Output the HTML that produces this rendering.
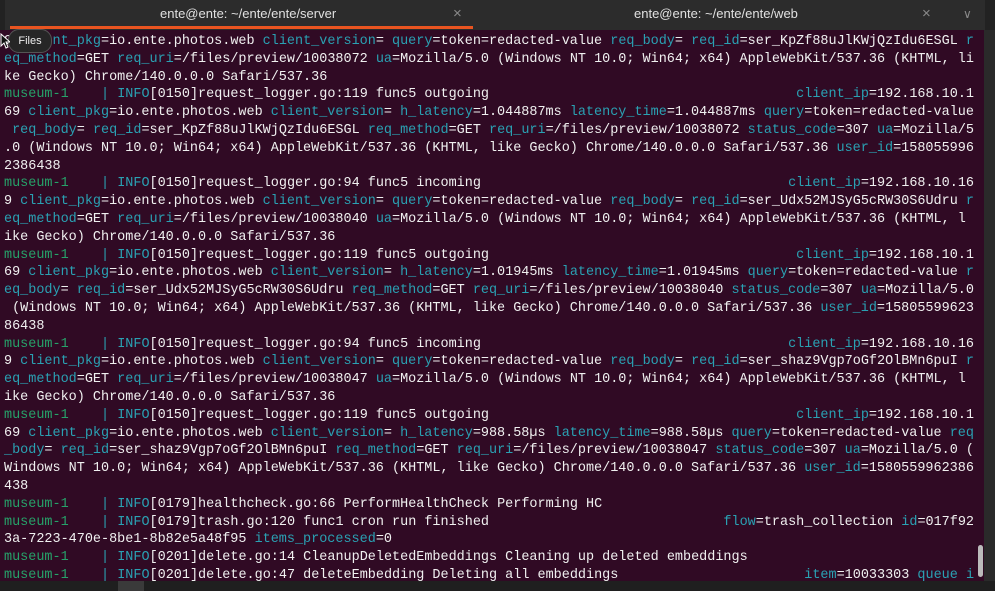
<!DOCTYPE html>
<html><head><meta charset="utf-8"><style>
html,body{margin:0;padding:0;width:995px;height:591px;overflow:hidden;background:#2b2b2b;}
#tabs{position:absolute;left:0;top:0;width:995px;height:30px;background:#2c2c2c;font-family:"Liberation Sans",sans-serif;font-size:13px;color:#e0e0e0;}
.tt{position:absolute;top:6px;}
.x{position:absolute;top:5px;color:#8a8a8a;font-size:15px;}
#ul{position:absolute;left:10px;top:26px;width:463px;height:3px;background:#e95420;}
#term{position:absolute;left:0;top:30px;width:984px;height:551px;background:#300a24;overflow:hidden;}
pre{margin:0;position:absolute;left:4px;top:3px;font-family:"Liberation Mono",monospace;font-size:13.48px;line-height:17.8px;color:#f0f0f0;}
i{font-style:normal;color:#2aa1b3;}
b{font-weight:normal;color:#26a269;}
#bot{position:absolute;left:0;top:581px;width:995px;height:10px;background:#1f1f1f;}
#tip{position:absolute;left:8px;top:29px;width:42px;height:22px;border-radius:11px;background:#262626;border:1px solid #555;color:#eee;font-family:"Liberation Sans",sans-serif;font-size:11px;line-height:22px;text-align:center;}
#thumb{position:absolute;left:978px;width:5px;height:32px;border-radius:3px;background:#bbb;}
</style></head><body>
<div id="tabs">
<div style="position:absolute;left:0;top:0;width:5px;height:30px;background:#222"></div>
<span class="tt" style="left:160px">ente@ente: ~/ente/ente/server</span>
<span class="x" style="left:453px">×</span>
<span class="tt" style="left:634px">ente@ente: ~/ente/ente/web</span>
<span class="x" style="left:922px">×</span>
<span class="x" style="left:963px;font-size:12px;top:7px">∨</span>
<div style="position:absolute;left:985px;top:0;width:10px;height:30px;background:#222"></div>
<div id="ul"></div>
</div>
<div id="term"><pre>9 <i>client_pkg</i>=io.ente.photos.web <i>client_version</i>= <i>query</i>=token=redacted-value <i>req_body</i>= <i>req_id</i>=ser_KpZf88uJlKWjQzIdu6ESGL <i>r</i>
<i>eq_method</i>=GET <i>req_uri</i>=/files/preview/10038072 <i>ua</i>=Mozilla/5.0 (Windows NT 10.0; Win64; x64) AppleWebKit/537.36 (KHTML, li
ke Gecko) Chrome/140.0.0.0 Safari/537.36
<b>museum-1</b>    <i>|</i> <i>INFO</i>[0150]request_logger.go:119 func5 outgoing                                      <i>client_ip</i>=192.168.10.1
69 <i>client_pkg</i>=io.ente.photos.web <i>client_version</i>= <i>h_latency</i>=1.044887ms <i>latency_time</i>=1.044887ms <i>query</i>=token=redacted-value
 <i>req_body</i>= <i>req_id</i>=ser_KpZf88uJlKWjQzIdu6ESGL <i>req_method</i>=GET <i>req_uri</i>=/files/preview/10038072 <i>status_code</i>=307 <i>ua</i>=Mozilla/5
.0 (Windows NT 10.0; Win64; x64) AppleWebKit/537.36 (KHTML, like Gecko) Chrome/140.0.0.0 Safari/537.36 <i>user_id</i>=158055996
2386438
<b>museum-1</b>    <i>|</i> <i>INFO</i>[0150]request_logger.go:94 func5 incoming                                      <i>client_ip</i>=192.168.10.16
9 <i>client_pkg</i>=io.ente.photos.web <i>client_version</i>= <i>query</i>=token=redacted-value <i>req_body</i>= <i>req_id</i>=ser_Udx52MJSyG5cRW30S6Udru <i>r</i>
<i>eq_method</i>=GET <i>req_uri</i>=/files/preview/10038040 <i>ua</i>=Mozilla/5.0 (Windows NT 10.0; Win64; x64) AppleWebKit/537.36 (KHTML, l
ike Gecko) Chrome/140.0.0.0 Safari/537.36
<b>museum-1</b>    <i>|</i> <i>INFO</i>[0150]request_logger.go:119 func5 outgoing                                      <i>client_ip</i>=192.168.10.1
69 <i>client_pkg</i>=io.ente.photos.web <i>client_version</i>= <i>h_latency</i>=1.01945ms <i>latency_time</i>=1.01945ms <i>query</i>=token=redacted-value <i>r</i>
<i>eq_body</i>= <i>req_id</i>=ser_Udx52MJSyG5cRW30S6Udru <i>req_method</i>=GET <i>req_uri</i>=/files/preview/10038040 <i>status_code</i>=307 <i>ua</i>=Mozilla/5.0
 (Windows NT 10.0; Win64; x64) AppleWebKit/537.36 (KHTML, like Gecko) Chrome/140.0.0.0 Safari/537.36 <i>user_id</i>=15805599623
86438
<b>museum-1</b>    <i>|</i> <i>INFO</i>[0150]request_logger.go:94 func5 incoming                                      <i>client_ip</i>=192.168.10.16
9 <i>client_pkg</i>=io.ente.photos.web <i>client_version</i>= <i>query</i>=token=redacted-value <i>req_body</i>= <i>req_id</i>=ser_shaz9Vgp7oGf2OlBMn6puI <i>r</i>
<i>eq_method</i>=GET <i>req_uri</i>=/files/preview/10038047 <i>ua</i>=Mozilla/5.0 (Windows NT 10.0; Win64; x64) AppleWebKit/537.36 (KHTML, l
ike Gecko) Chrome/140.0.0.0 Safari/537.36
<b>museum-1</b>    <i>|</i> <i>INFO</i>[0150]request_logger.go:119 func5 outgoing                                      <i>client_ip</i>=192.168.10.1
69 <i>client_pkg</i>=io.ente.photos.web <i>client_version</i>= <i>h_latency</i>=988.58µs <i>latency_time</i>=988.58µs <i>query</i>=token=redacted-value <i>req</i>
<i>_body</i>= <i>req_id</i>=ser_shaz9Vgp7oGf2OlBMn6puI <i>req_method</i>=GET <i>req_uri</i>=/files/preview/10038047 <i>status_code</i>=307 <i>ua</i>=Mozilla/5.0 (
Windows NT 10.0; Win64; x64) AppleWebKit/537.36 (KHTML, like Gecko) Chrome/140.0.0.0 Safari/537.36 <i>user_id</i>=1580559962386
438
<b>museum-1</b>    <i>|</i> <i>INFO</i>[0179]healthcheck.go:66 PerformHealthCheck Performing HC
<b>museum-1</b>    <i>|</i> <i>INFO</i>[0179]trash.go:120 func1 cron run finished                             <i>flow</i>=trash_collection <i>id</i>=017f92
3a-7223-470e-8be1-8b82e5a48f95 <i>items_processed</i>=0
<b>museum-1</b>    <i>|</i> <i>INFO</i>[0201]delete.go:14 CleanupDeletedEmbeddings Cleaning up deleted embeddings
<b>museum-1</b>    <i>|</i> <i>INFO</i>[0201]delete.go:47 deleteEmbedding Deleting all embeddings                       <i>item</i>=10033303 <i>queue</i> <i>i</i></pre>
<div id="thumb" style="top:515px"></div>
</div>
<div style="position:absolute;left:984px;top:30px;width:11px;height:551px;background:#2a2a2a"></div>
<div id="bot"><div style="position:absolute;left:118px;top:0;width:26px;height:10px;background:#3a3a3a"></div></div>
<div id="tip">Files</div>
<svg style="position:absolute;left:0;top:33px" width="10" height="16"><path d="M1 1 L1 13 L4 10 L6 15 L8 14 L6 9 L10 9 Z" fill="#111" stroke="#fff" stroke-width="1"/></svg>
</body></html>
